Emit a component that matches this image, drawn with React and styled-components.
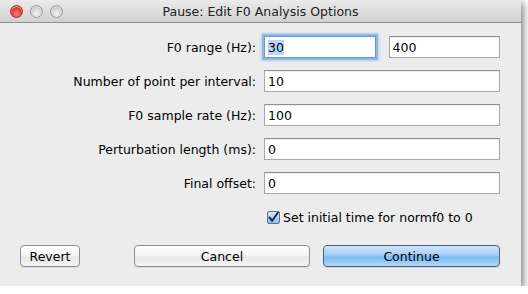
import React from 'react';
import styled, { createGlobalStyle } from 'styled-components';

const Global = createGlobalStyle`
  html, body {
    margin: 0;
    padding: 0;
    background: #ffffff;
  }
  * {
    box-sizing: border-box;
  }
`;

const Window = styled.div`
  width: 521px;
  height: 286px;
  background: #ececec;
  display: flex;
  flex-direction: column;
  box-shadow: 2px 3px 8px rgba(0, 0, 0, 0.55);
  font-family: 'DejaVu Sans', 'Liberation Sans', sans-serif;
  font-size: 12.5px;
  color: #000;
`;

const TitleBar = styled.div`
  height: 23px;
  flex: none;
  display: flex;
  align-items: center;
  position: relative;
  background: linear-gradient(#ebebeb, #d1d1d1);
  border-bottom: 1px solid #8f8f8f;
  padding-left: 10px;
`;

const Lights = styled.div`
  display: flex;
  gap: 7px;
`;

const Light = styled.span`
  width: 13px;
  height: 13px;
  border-radius: 50%;
  border: 1px solid ${p => (p.$red ? '#a8332e' : '#9d9d9d')};
  background: ${p =>
    p.$red
      ? 'radial-gradient(circle at 50% 70%, #ff8a80 0%, #f0413a 45%, #b8211c 100%)'
      : 'radial-gradient(circle at 50% 70%, #f4f4f4 0%, #d6d6d6 50%, #a9a9a9 100%)'};
  box-shadow: inset 0 1px 1px rgba(255, 255, 255, 0.6);
`;

const Title = styled.div`
  position: absolute;
  left: 0;
  right: 0;
  text-align: center;
  color: #222;
  pointer-events: none;
`;

const Body = styled.div`
  flex: 1;
  display: flex;
  flex-direction: column;
  padding: 13px 21px 19px 20px;
`;

const Form = styled.div`
  display: grid;
  grid-template-columns: 236px 236px;
  column-gap: 8px;
  row-gap: 12px;
  align-items: center;
`;

const Label = styled.label`
  text-align: right;
  white-space: nowrap;
`;

const Pair = styled.div`
  display: flex;
  gap: 13px;
`;

const Field = styled.input`
  flex: 1;
  min-width: 0;
  width: 100%;
  height: 22px;
  border: 1px solid #a8a8a8;
  border-top-color: #8e8e8e;
  background: #fff;
  font: inherit;
  color: #000;
  padding: 1px 3px 0;
  outline: none;
  box-shadow: inset 0 1px 1px rgba(0, 0, 0, 0.08);
`;

const Selected = styled.span`
  background: #b5d5fb;
`;

const FocusField = styled.div`
  flex: 1;
  height: 22px;
  border: 1px solid #6c9ad6;
  background: #fff;
  padding: 3px 3px 0;
  box-shadow: 0 0 0 2px #8db9ea, 0 0 2px 3px rgba(126, 174, 227, 0.45);
  color: #000;
`;

const CheckRow = styled.div`
  display: flex;
  align-items: center;
  gap: 3px;
  margin: 16px 0 0 247px;
`;

const Box = styled.span`
  width: 13px;
  height: 13px;
  border: 1px solid #5d6f8a;
  border-radius: 2px;
  background: linear-gradient(#d6e8fb, #8fc0ee);
  display: flex;
  align-items: center;
  justify-content: center;
`;

const Buttons = styled.div`
  margin-top: auto;
  display: flex;
  align-items: center;
`;

const Button = styled.button`
  height: 22px;
  width: ${p => p.$w}px;
  margin-left: ${p => p.$ml || 0}px;
  border-radius: 4px;
  border: 1px solid ${p => (p.$primary ? '#4a5f82' : '#8d8d8d')};
  background: ${p =>
    p.$primary
      ? 'linear-gradient(#cfe5fc 0%, #a3cff7 45%, #7bbaf2 55%, #aed9fb 100%)'
      : 'linear-gradient(#ffffff 0%, #f6f6f6 45%, #e8e8e8 55%, #f4f4f4 100%)'};
  box-shadow: 0 1px 0 rgba(0, 0, 0, 0.08);
  font: inherit;
  color: #000;
  padding: 0;
`;

const rows = [
  ['Number of point per interval:', '10'],
  ['F0 sample rate (Hz):', '100'],
  ['Perturbation length (ms):', '0'],
  ['Final offset:', '0'],
];

export default function App() {
  return (
    <>
      <Global />
      <Window>
        <TitleBar>
          <Lights>
            <Light $red />
            <Light />
            <Light />
          </Lights>
          <Title>Pause: Edit F0 Analysis Options</Title>
        </TitleBar>
        <Body>
          <Form>
            <Label>F0 range (Hz):</Label>
            <Pair>
              <FocusField>
                <Selected>30</Selected>
              </FocusField>
              <Field defaultValue="400" />
            </Pair>
            {rows.map(([label, value]) => (
              <React.Fragment key={label}>
                <Label>{label}</Label>
                <Field defaultValue={value} />
              </React.Fragment>
            ))}
          </Form>
          <CheckRow>
            <Box>
              <svg width="11" height="11" viewBox="0 0 11 11">
                <path d="M1.5 5.5 L4.2 8.8 L9.8 0.8" fill="none" stroke="#1b2a45" strokeWidth="2" strokeLinecap="round" strokeLinejoin="round" />
              </svg>
            </Box>
            <span>Set initial time for normf0 to 0</span>
          </CheckRow>
          <Buttons>
            <Button $w={60}>Revert</Button>
            <Button $w={176} $ml={54}>Cancel</Button>
            <Button $w={177} $ml={13} $primary>Continue</Button>
          </Buttons>
        </Body>
      </Window>
    </>
  );
}
